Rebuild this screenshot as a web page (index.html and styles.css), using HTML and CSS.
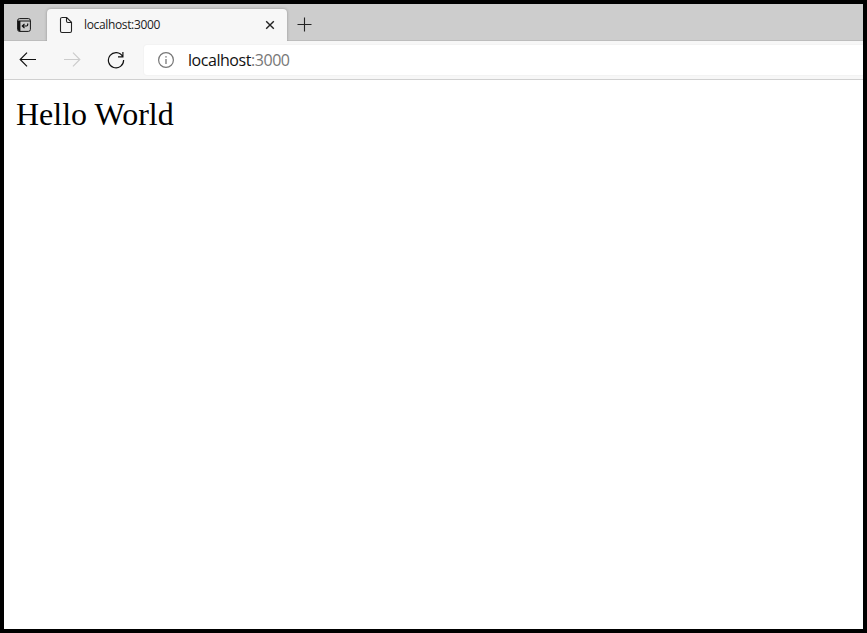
FILE: index.html
```
<!DOCTYPE html>
<html lang="en">
<head>
<meta charset="utf-8">
<title>localhost:3000</title>
<link rel="stylesheet" href="styles.css">
</head>
<body>
<div class="window">
  <header class="tabs">
    <div class="tab-actions">
      <svg width="16" height="16" viewBox="0 0 16 16" fill="none" stroke="#111">
        <rect x="1.600" y="1.600" width="12.800" height="12.800" rx="2" stroke-width="1"/>
        <path d="M1.500 4h13" stroke-width="1"/>
        <path d="M2 4h2.400v10.400H3.500L2 13z" fill="#111" stroke="none"/>
        <path d="M11.700 6.500v1.300q0 1.200-1.200 1.200H6.500M8.500 6.800 6.300 9l2.200 2.200" stroke-width="1.200"/>
      </svg>
    </div>
    <div class="tab">
      <svg class="page-icon" width="14" height="18" viewBox="0 0 14 18" fill="none" stroke="#222" stroke-width="1.100">
        <path d="M2.500 1.500h5.200l4.800 4.800v8.700q0 1.500-1.500 1.500H3q-1.500 0-1.500-1.500V3q0-1.500 1.500-1.500M7.500 1.500v3.500q0 1.500 1.500 1.500h3.500"/>
      </svg>
      <span class="tab-title">localhost:3000</span>
      <svg class="close" width="10" height="10" viewBox="0 0 10 10" stroke="#222" stroke-width="1.400"><path d="m1.200 1.200 7.600 7.600M8.800 1.200 1.200 8.800"/></svg>
    </div>
    <svg class="new-tab" width="15" height="15" viewBox="0 0 15 15" stroke="#222" stroke-width="1.100"><path d="M7.500.5v14M.5 7.500h14"/></svg>
  </header>
  <nav class="toolbar">
    <svg class="back" width="18" height="16" viewBox="0 0 18 16" fill="none" stroke="#111" stroke-width="1.200"><path d="M17 7.500H1.500M8 .7 1.200 7.500 8 14.300"/></svg>
    <svg class="forward" width="18" height="16" viewBox="0 0 18 16" fill="none" stroke="#ccc" stroke-width="1.200"><path d="M1 7.500h15.500M10 .7l6.800 6.800-6.800 6.800"/></svg>
    <svg class="reload" width="18" height="18" viewBox="0 0 18 18" fill="none" stroke="#111" stroke-width="1.200"><path d="M15.600 5.500A7.600 7.600 0 1 0 16.600 9M15.900 1v4.900H11"/></svg>
    <div class="address">
      <svg class="info" width="16" height="16" viewBox="0 0 16 16" fill="none" stroke="#777"><circle cx="8" cy="8" r="7.400" stroke-width="1.200"/><path d="M8 7v5" stroke-width="1.300"/><path d="M8 4.200v1.400" stroke-width="1.500"/></svg>
      <span class="url">localhost<span class="port">:3000</span></span>
    </div>
  </nav>
  <main class="page">Hello World</main>
</div>
</body>
</html>
```
FILE: styles.css
```
* { box-sizing: border-box; }
body { margin: 0; }
svg { display: block; flex: none; }
.window {
  width: 867px;
  height: 633px;
  border: 4px solid #000;
  background: #fff;
  display: flex;
  flex-direction: column;
  overflow: hidden;
  font-family: "Open Sans", sans-serif;
}
.tabs {
  height: 37px;
  flex: none;
  display: flex;
  align-items: flex-end;
  background: #cdcdcd;
  box-shadow: inset 0 -1px #bdbdbd;
}
.tab-actions { width: 43px; padding: 0 0 8px 12px; }
.tab {
  width: 240px;
  height: 32px;
  padding: 0 12px;
  display: flex;
  align-items: center;
  background: #f7f7f7;
  border-radius: 4px 4px 0 0;
  box-shadow: 0 0 3px rgba(0, 0, 0, .3);
  clip-path: inset(-4px -4px 0);
}
.tab-title {
  margin-left: 11px;
  font-size: 12px;
  line-height: 16px;
  letter-spacing: -.35px;
  color: #222;
  white-space: nowrap;
}
.close { margin-left: auto; }
.new-tab { margin: 0 0 9px 10px; }
.toolbar {
  height: 39px;
  flex: none;
  display: flex;
  align-items: center;
  padding-left: 15px;
  background: #f7f7f7;
  border-bottom: 1px solid #d0d0d0;
}
.forward { margin-left: 26px; }
.reload { margin-left: 26px; }
.address {
  flex: 1;
  height: 30px;
  margin-left: 19px;
  padding-left: 14px;
  display: flex;
  align-items: center;
  background: #fff;
  border-radius: 3px 0 0 3px;
  box-shadow: 0 0 2px rgba(0, 0, 0, .07);
}
.url {
  margin-left: 14px;
  font-size: 16px;
  line-height: 22px;
  letter-spacing: -.45px;
  color: #111;
}
.port { color: #777; }
.page {
  padding: 16px 12px;
  font: 32px/36px "Liberation Serif", serif;
  color: #000;
}
```
